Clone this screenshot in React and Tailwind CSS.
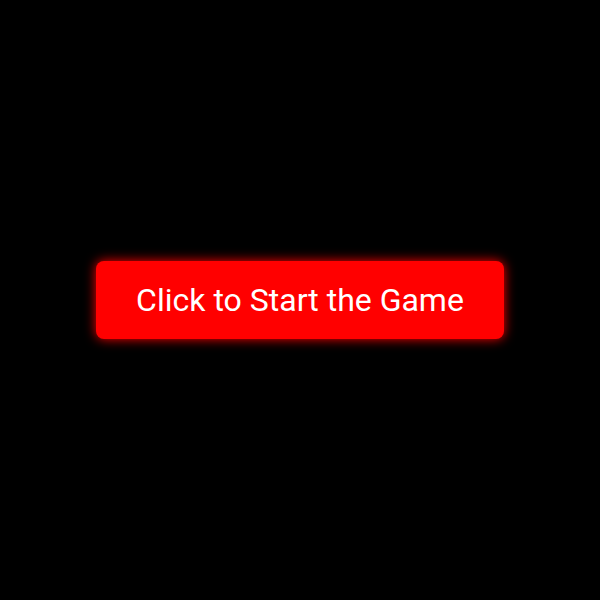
import React from 'react';

const App = () => {
    return (
        <div className="flex h-[600px] w-[600px] items-center justify-center bg-black">
            <button className="flex h-[78px] w-[408px] items-center justify-center rounded-[8px] bg-[#ff0000] text-[32px] text-white shadow-[0_0_12px_#ff0000] font-['Roboto',sans-serif]">
                Click to Start the Game
            </button>
        </div>
    );
};

export default App;
